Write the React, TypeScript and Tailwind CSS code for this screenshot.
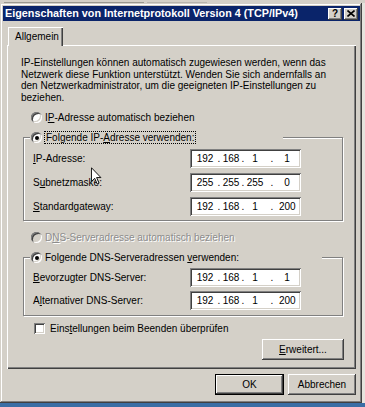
import React from 'react';

const U = ({ c }: { c: string }) => <span className="underline underline-offset-[1px]">{c}</span>;

const Radio = ({ on, dim }: { on?: boolean; dim?: boolean }) => (
    <span
        className={`flex items-center justify-center w-[11px] h-[11px] rounded-full shrink-0 ${
            dim ? 'bg-[#d4d0c8]' : 'bg-white'
        } shadow-[inset_1px_1px_0_#808080,inset_-1px_-1px_0_#ffffff,inset_2px_2px_0_#404040,inset_-2px_-2px_0_#d4d0c8]`}
    >
        {on && <span className="w-[4px] h-[4px] rounded-full bg-black" />}
    </span>
);

const IpField = ({ parts }: { parts: string[] }) => (
    <div className="flex items-center w-[111px] h-[19px] bg-white pl-[3px] shadow-[inset_1px_1px_0_#808080,inset_-1px_-1px_0_#ffffff,inset_2px_2px_0_#404040,inset_-2px_-2px_0_#d4d0c8]">
        <span className="w-[24px] text-center">{parts[0]}</span>
        <span className="w-[4px] text-center">.</span>
        <span className="w-[20px] text-center">{parts[1]}</span>
        <span className="w-[4px] text-center">.</span>
        <span className="w-[20px] text-center">{parts[2]}</span>
        <span className="w-[14px] text-center">.</span>
        <span className="w-[16px] text-center">{parts[3]}</span>
    </div>
);

const Row = ({ label, parts }: { label: React.ReactNode; parts: string[] }) => (
    <div className="flex items-center h-[19px]">
        <span className="w-[166px] pl-[9px] whitespace-nowrap">{label}</span>
        <IpField parts={parts} />
    </div>
);

const Btn = ({ children, w, def }: { children: React.ReactNode; w: string; def?: boolean }) => (
    <div
        className={`${w} h-[21px] flex items-center justify-center bg-[#d4d0c8] ${
            def
                ? 'shadow-[inset_0_0_0_1px_#000000,inset_-2px_-2px_0_#404040,inset_2px_2px_0_#ffffff,inset_-3px_-3px_0_#808080]'
                : 'shadow-[inset_-1px_-1px_0_#404040,inset_1px_1px_0_#ffffff,inset_-2px_-2px_0_#808080]'
        }`}
    >
        {children}
    </div>
);

export default function App() {
    return (
        <div className="relative w-[365px] h-[407px] overflow-hidden flex flex-col bg-[#3a6ea5] text-black text-[10px] leading-none font-['Liberation_Sans',Arial,sans-serif]">
            {/* edge of the window behind */}
            <div className="h-[3px] shrink-0 flex items-end gap-[3px] pl-[4px] bg-[#d4d0c8]">
                <span className="w-[140px] h-[1px] bg-[#9a9890]" />
                <span className="w-[60px] h-[1px] bg-[#b8b5ae]" />
            </div>

            <div className="flex h-[400px] shrink-0">
                <div className="w-[362px] h-[400px] shrink-0 flex flex-col bg-[#d4d0c8] pt-[3px] pl-[3px] pr-[2px] shadow-[inset_-1px_-1px_0_#404040,inset_1px_1px_0_#d4d0c8,inset_-2px_-2px_0_#808080,inset_2px_2px_0_#ffffff]">
                    {/* title bar */}
                    <div className="h-[15px] flex items-center bg-[#0a246a] pl-[2px] pr-[2px]">
                        <span className="flex-1 text-white font-bold text-[10.8px] whitespace-nowrap">
                            Eigenschaften von Internetprotokoll Version 4 (TCP/IPv4)
                        </span>
                        <div className="flex gap-[2px]">
                            <div className="w-[14px] h-[12px] flex items-center justify-center bg-[#d4d0c8] font-bold text-[10px] shadow-[inset_-1px_-1px_0_#404040,inset_1px_1px_0_#ffffff,inset_-2px_-2px_0_#808080]">
                                ?
                            </div>
                            <div className="w-[14px] h-[12px] flex items-center justify-center bg-[#d4d0c8] shadow-[inset_-1px_-1px_0_#404040,inset_1px_1px_0_#ffffff,inset_-2px_-2px_0_#808080]">
                                <svg width="8" height="7" viewBox="0 0 8 7">
                                    <path d="M0.5 0.5 L7.5 6.5 M7.5 0.5 L0.5 6.5" stroke="#000" strokeWidth="1.6" />
                                </svg>
                            </div>
                        </div>
                    </div>

                    {/* body */}
                    <div className="flex flex-col pl-[4px] pr-[4px] mt-[6px]">
                        <div className="relative z-10 -mb-[1px] ml-[1px] w-[55px] h-[19px] pl-[7px] flex items-center bg-[#d4d0c8] shadow-[inset_1px_1px_0_#ffffff,inset_-1px_0_0_#404040,inset_-2px_0_0_#808080]">
                            Allgemein
                        </div>

                        <div className="h-[324px] flex flex-col shadow-[inset_1px_1px_0_#ffffff,inset_-1px_-1px_0_#404040,inset_-2px_-2px_0_#808080]">
                            <p className="mt-[12px] ml-[14px] leading-[11.5px] whitespace-nowrap">
                                IP-Einstellungen können automatisch zugewiesen werden, wenn das
                                <br />
                                Netzwerk diese Funktion unterstützt. Wenden Sie sich andernfalls an
                                <br />
                                den Netzwerkadministrator, um die geeigneten IP-Einstellungen zu
                                <br />
                                beziehen.
                            </p>

                            <div className="mt-[8px] ml-[24px] h-[13px] flex items-center">
                                <Radio />
                                <span className="ml-[3px] whitespace-nowrap">
                                    I<U c="P" />-Adresse automatisch beziehen
                                </span>
                            </div>

                            <div className="mt-[13px] ml-[16px] w-[320px] h-[84px] flex flex-col border border-[#808080] shadow-[inset_1px_1px_0_#ffffff,1px_1px_0_#ffffff]">
                                <div className="-mt-[7px] ml-[6px] pl-[1px] w-[253px] h-[13px] flex items-center bg-[#d4d0c8]">
                                    <Radio on />
                                    <span className="ml-[2px] px-[1px] h-[13px] flex items-center border border-dotted border-black whitespace-nowrap">
                                        Folgende IP-<U c="A" />dresse verwenden:
                                    </span>
                                </div>
                                <div className="mt-[5px] flex flex-col gap-[5px]">
                                    <Row label={<><U c="I" />P-Adresse:</>} parts={['192', '168', '1', '1']} />
                                    <Row label={<>S<U c="u" />bnetzmaske:</>} parts={['255', '255', '255', '0']} />
                                    <Row label={<><U c="S" />tandardgateway:</>} parts={['192', '168', '1', '200']} />
                                </div>
                            </div>

                            <div className="mt-[10px] ml-[24px] h-[13px] flex items-center">
                                <Radio dim />
                                <span className="ml-[3px] whitespace-nowrap text-[#8c8c8c] [text-shadow:1px_1px_0_#ffffff]">
                                    D<U c="N" />S-Serveradresse automatisch beziehen
                                </span>
                            </div>

                            <div className="mt-[13px] ml-[16px] w-[320px] h-[59px] flex flex-col border border-[#808080] shadow-[inset_1px_1px_0_#ffffff,1px_1px_0_#ffffff]">
                                <div className="-mt-[7px] ml-[6px] pl-[1px] w-[292px] h-[13px] flex items-center bg-[#d4d0c8]">
                                    <Radio on />
                                    <span className="ml-[3px] whitespace-nowrap">
                                        Folgende DNS-Serveradressen <U c="v" />erwenden:
                                    </span>
                                </div>
                                <div className="mt-[4px] flex flex-col gap-[4px]">
                                    <Row label={<><U c="B" />evorzugter DNS-Server:</>} parts={['192', '168', '1', '1']} />
                                    <Row label={<>A<U c="l" />ternativer DNS-Server:</>} parts={['192', '168', '1', '200']} />
                                </div>
                            </div>

                            <div className="mt-[6px] ml-[27px] h-[13px] flex items-center">
                                <span className="w-[11px] h-[11px] shrink-0 bg-white shadow-[inset_1px_1px_0_#808080,inset_-1px_-1px_0_#ffffff,inset_2px_2px_0_#404040,inset_-2px_-2px_0_#d4d0c8]" />
                                <span className="ml-[5px] whitespace-nowrap">
                                    Eins<U c="t" />ellungen beim Beenden überprüfen
                                </span>
                            </div>

                            <div className="mt-[4px] self-end mr-[12px]">
                                <Btn w="w-[82px]">
                                    <U c="E" />rweitert...
                                </Btn>
                            </div>
                        </div>

                        <div className="mt-[5px] flex justify-end gap-[4px]">
                            <Btn w="w-[69px]" def>
                                OK
                            </Btn>
                            <Btn w="w-[68px]">Abbrechen</Btn>
                        </div>
                    </div>
                </div>
                <div className="flex-1 bg-[#e6e4de]" />
            </div>

            {/* mouse pointer */}
            <svg className="absolute left-[91px] top-[167px]" width="11" height="18" viewBox="0 0 12 19">
                <path d="M0.5 0.5 L0.5 15.5 L4 12 L6.8 18.2 L8.8 17.3 L6.1 11.2 L10.8 11.2 Z" fill="#fff" stroke="#000" strokeWidth="1" />
            </svg>
        </div>
    );
}
